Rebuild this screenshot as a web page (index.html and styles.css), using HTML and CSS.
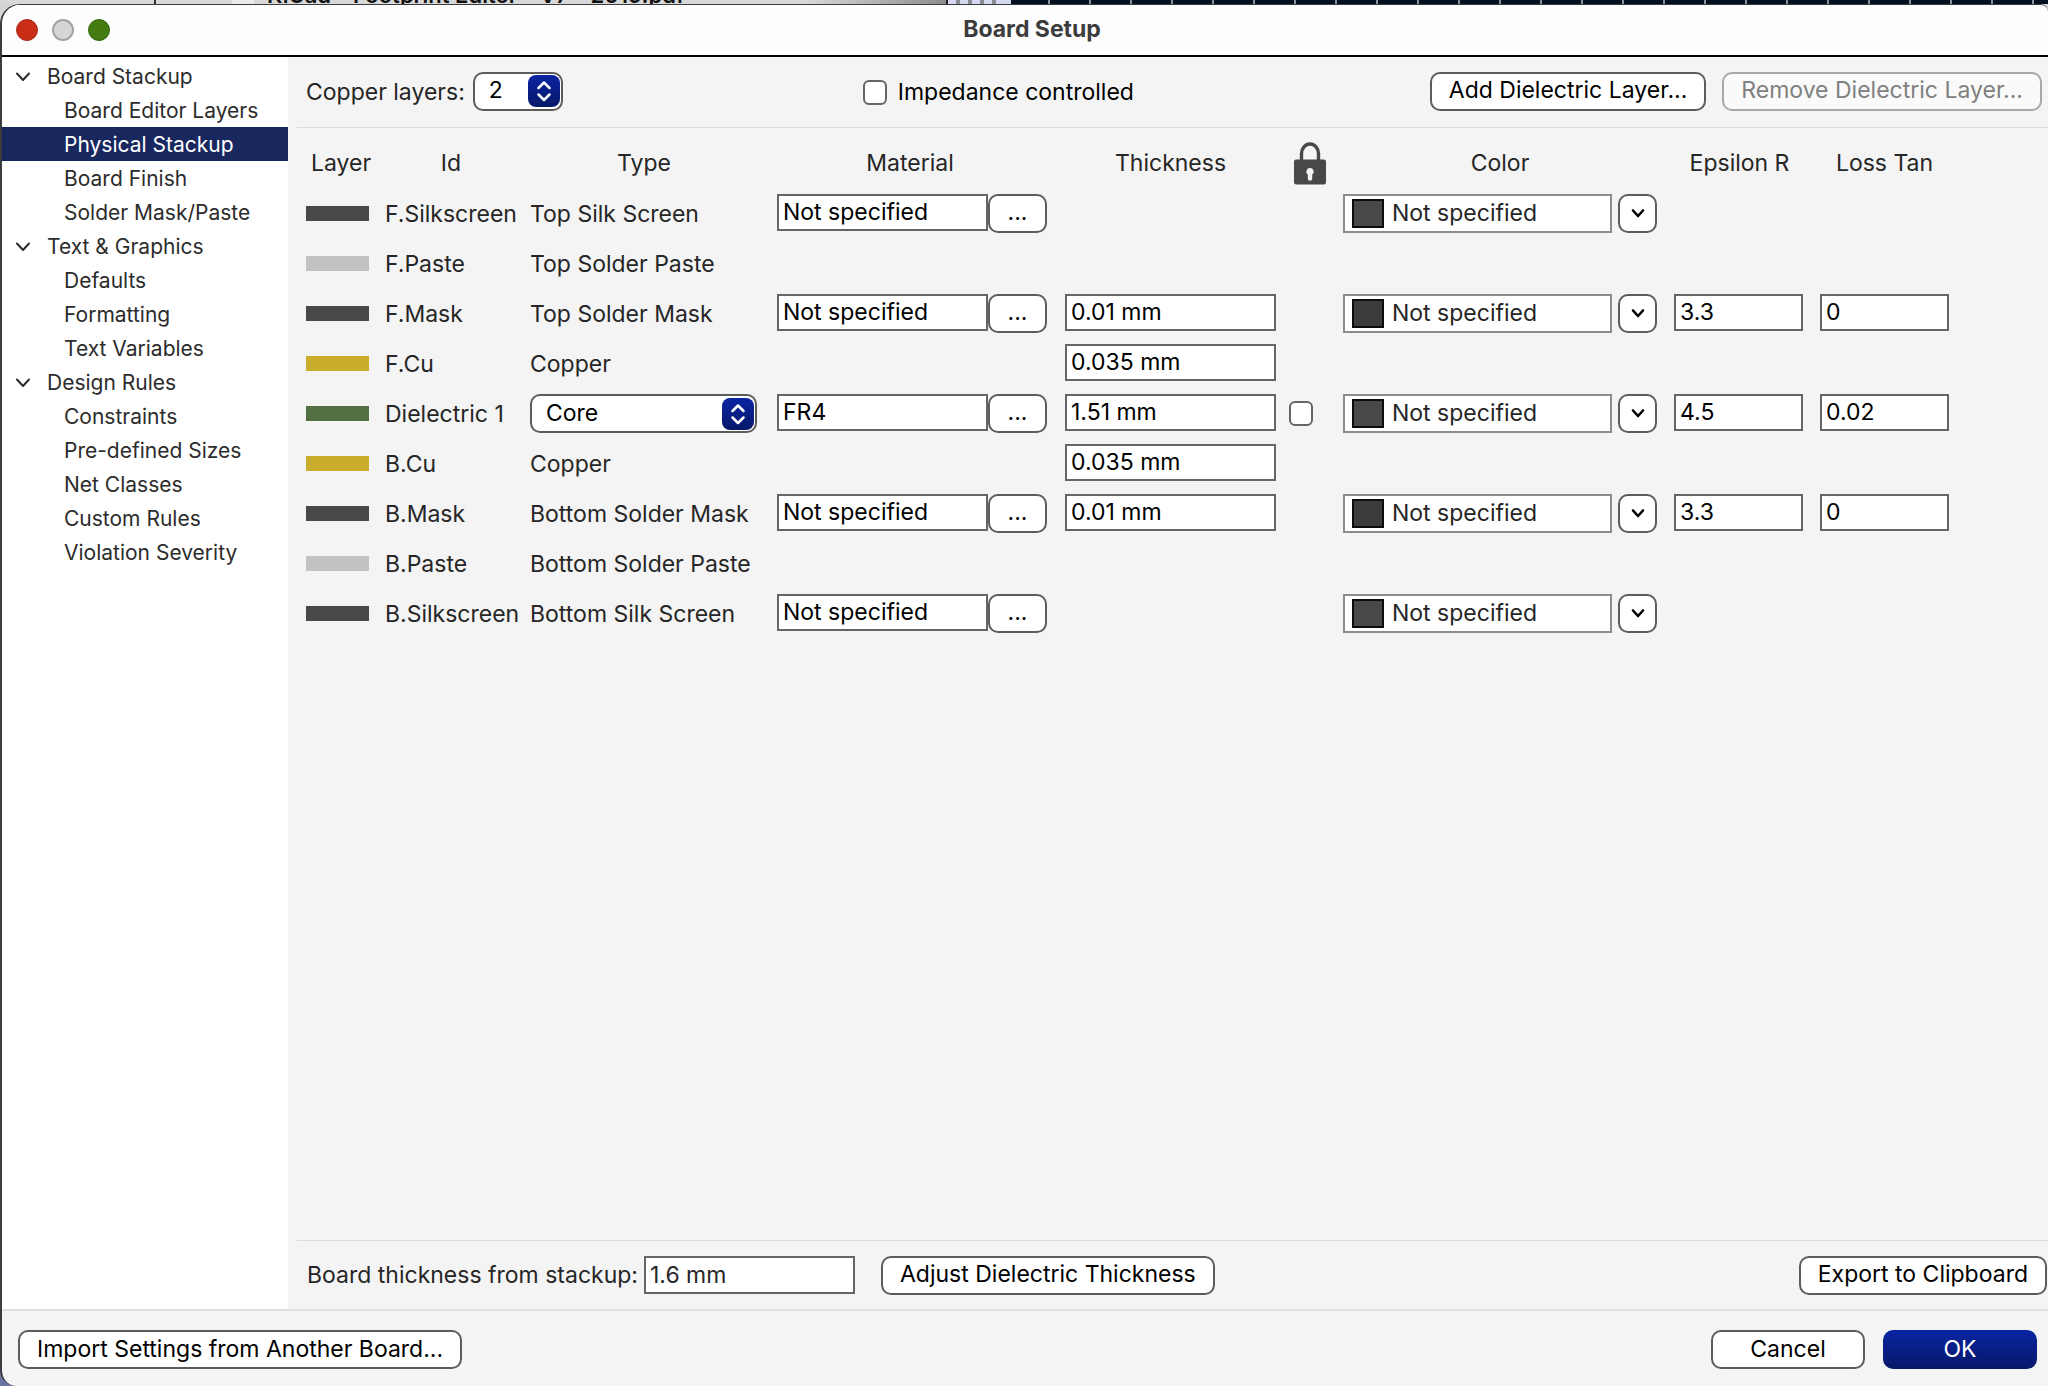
FILE: index.html
```html
<!DOCTYPE html>
<html lang="en">
<head>
<meta charset="utf-8">
<title>Board Setup</title>
<link rel="stylesheet" href="styles.css">
</head>
<body>
<svg class="defs" aria-hidden="true">
  <symbol id="updown" viewBox="0 0 32 32"><path d="M10.500 13 16 7.500 21.500 13M10.500 19.500 16 25 21.500 19.500" fill="none" stroke="#fff" stroke-width="2.500" stroke-linecap="round" stroke-linejoin="round"/></symbol>
  <symbol id="down" viewBox="0 0 16 16"><path d="M3 5.500 8 11 13 5.500" fill="none" stroke="currentColor" stroke-width="2.600" stroke-linecap="round" stroke-linejoin="round"/></symbol>
  <symbol id="twist" viewBox="0 0 16 16"><path d="M2 4.500 8 11 14 4.500" fill="none" stroke="currentColor" stroke-width="2" stroke-linecap="round" stroke-linejoin="round"/></symbol>
</svg>
<div class="behind">
  <div class="doc-title">KiCad – Footprint Editor – V7 – 2019.pdf</div>
  <div class="palette"></div>
  <div class="canvas"></div>
</div>
<div class="window">
  <header class="titlebar">
    <div class="lights">
      <button class="light close" aria-label="Close"></button>
      <button class="light mini" aria-label="Minimize" disabled></button>
      <button class="light full" aria-label="Zoom"></button>
    </div>
    <h1>Board Setup</h1>
  </header>
  <div class="body">
    <nav class="tree">
      <a class="group" href="#"><svg><use href="#twist"/></svg>Board Stackup</a>
      <a href="#">Board Editor Layers</a>
      <a class="current" href="#">Physical Stackup</a>
      <a href="#">Board Finish</a>
      <a href="#">Solder Mask/Paste</a>
      <a class="group" href="#"><svg><use href="#twist"/></svg>Text &amp; Graphics</a>
      <a href="#">Defaults</a>
      <a href="#">Formatting</a>
      <a href="#">Text Variables</a>
      <a class="group" href="#"><svg><use href="#twist"/></svg>Design Rules</a>
      <a href="#">Constraints</a>
      <a href="#">Pre-defined Sizes</a>
      <a href="#">Net Classes</a>
      <a href="#">Custom Rules</a>
      <a href="#">Violation Severity</a>
    </nav>
    <main class="panel">
      <div class="toolbar">
        <label for="copper">Copper layers:</label>
        <span class="pick pick-small"><select id="copper"><option>2</option><option>4</option></select><svg><use href="#updown"/></svg></span>
        <label class="check"><input type="checkbox">Impedance controlled</label>
        <div class="actions">
          <button class="btn">Add Dielectric Layer...</button>
          <button class="btn" disabled>Remove Dielectric Layer...</button>
        </div>
      </div>
      <div class="scroll">
      <table class="stack">
        <colgroup><col class="c-layer"><col class="c-id"><col class="c-type"><col class="c-mat"><col class="c-thick"><col class="c-lock"><col class="c-color"><col class="c-eps"><col class="c-loss"></colgroup>
        <thead>
          <tr><th>Layer</th><th>Id</th><th>Type</th><th class="th-mat">Material</th><th>Thickness</th>
          <th><svg class="lock" viewBox="0 0 34 44" role="img" aria-label="Locked"><path d="M8.500 20V12.500a8.500 9.500 0 0 1 17 0V20" fill="none" stroke="#484848" stroke-width="3.400"/><path fill="#484848" fill-rule="evenodd" d="M3 18.500H31a2 2 0 0 1 2 2V41a2.500 2.500 0 0 1-2.500 2.500H3.500A2.500 2.500 0 0 1 1 41V20.500a2 2 0 0 1 2-2zM17 27a3.600 3.600 0 0 0-2.200 6.500V37.500a2.200 2.200 0 0 0 4.400 0V33.500A3.600 3.600 0 0 0 17 27z"/></svg></th>
          <th>Color</th><th>Epsilon R</th><th>Loss Tan</th></tr>
        </thead>
        <tbody>
          <tr><td><i class="sw dark"></i></td><td>F.Silkscreen</td><td>Top Silk Screen</td>
            <td><div class="pair"><input class="wide" aria-label="Material" value="Not specified"><button class="btn more">...</button></div></td><td></td><td></td>
            <td><div class="color"><span class="well"><i class="chip"></i>Not specified</span><button class="btn drop" aria-label="Choose color"><svg><use href="#down"/></svg></button></div></td><td></td><td></td></tr>
          <tr><td><i class="sw paste"></i></td><td>F.Paste</td><td>Top Solder Paste</td><td></td><td></td><td></td><td></td><td></td><td></td></tr>
          <tr><td><i class="sw dark"></i></td><td>F.Mask</td><td>Top Solder Mask</td>
            <td><div class="pair"><input class="wide" aria-label="Material" value="Not specified"><button class="btn more">...</button></div></td>
            <td><div class="pair"><input class="wide" aria-label="Thickness" value="0.01 mm"></div></td><td></td>
            <td><div class="color"><span class="well"><i class="chip mask"></i>Not specified</span><button class="btn drop" aria-label="Choose color"><svg><use href="#down"/></svg></button></div></td>
            <td><div class="pair"><input class="narrow" aria-label="Epsilon R" value="3.3"></div></td><td><div class="pair"><input class="narrow" aria-label="Loss Tan" value="0"></div></td></tr>
          <tr><td><i class="sw copper"></i></td><td>F.Cu</td><td>Copper</td><td></td><td><div class="pair"><input class="wide" aria-label="Thickness" value="0.035 mm"></div></td><td></td><td></td><td></td><td></td></tr>
          <tr><td><i class="sw core"></i></td><td>Dielectric 1</td>
            <td><span class="pick pick-wide"><select aria-label="Type"><option>Core</option><option>PrePreg</option></select><svg><use href="#updown"/></svg></span></td>
            <td><div class="pair"><input class="wide" aria-label="Material" value="FR4"><button class="btn more">...</button></div></td>
            <td><div class="pair"><input class="wide" aria-label="Thickness" value="1.51 mm"></div></td><td><input type="checkbox" aria-label="Lock thickness"></td>
            <td><div class="color"><span class="well"><i class="chip"></i>Not specified</span><button class="btn drop" aria-label="Choose color"><svg><use href="#down"/></svg></button></div></td>
            <td><div class="pair"><input class="narrow" aria-label="Epsilon R" value="4.5"></div></td><td><div class="pair"><input class="narrow" aria-label="Loss Tan" value="0.02"></div></td></tr>
          <tr><td><i class="sw copper"></i></td><td>B.Cu</td><td>Copper</td><td></td><td><div class="pair"><input class="wide" aria-label="Thickness" value="0.035 mm"></div></td><td></td><td></td><td></td><td></td></tr>
          <tr><td><i class="sw dark"></i></td><td>B.Mask</td><td>Bottom Solder Mask</td>
            <td><div class="pair"><input class="wide" aria-label="Material" value="Not specified"><button class="btn more">...</button></div></td>
            <td><div class="pair"><input class="wide" aria-label="Thickness" value="0.01 mm"></div></td><td></td>
            <td><div class="color"><span class="well"><i class="chip mask"></i>Not specified</span><button class="btn drop" aria-label="Choose color"><svg><use href="#down"/></svg></button></div></td>
            <td><div class="pair"><input class="narrow" aria-label="Epsilon R" value="3.3"></div></td><td><div class="pair"><input class="narrow" aria-label="Loss Tan" value="0"></div></td></tr>
          <tr><td><i class="sw paste"></i></td><td>B.Paste</td><td>Bottom Solder Paste</td><td></td><td></td><td></td><td></td><td></td><td></td></tr>
          <tr><td><i class="sw dark"></i></td><td>B.Silkscreen</td><td>Bottom Silk Screen</td>
            <td><div class="pair"><input class="wide" aria-label="Material" value="Not specified"><button class="btn more">...</button></div></td><td></td><td></td>
            <td><div class="color"><span class="well"><i class="chip"></i>Not specified</span><button class="btn drop" aria-label="Choose color"><svg><use href="#down"/></svg></button></div></td><td></td><td></td></tr>
        </tbody>
      </table>
      </div>
      <div class="summary">
        <label for="total">Board thickness from stackup:</label>
        <input class="wide readonly" id="total" value="1.6 mm" readonly>
        <button class="btn adjust">Adjust Dielectric Thickness</button>
        <button class="btn export">Export to Clipboard</button>
      </div>
    </main>
  </div>
  <footer class="footer">
    <button class="btn">Import Settings from Another Board...</button>
    <div class="answer">
      <button class="btn big">Cancel</button>
      <button class="btn big primary">OK</button>
    </div>
  </footer>
</div>
</body>
</html>
```
FILE: styles.css
```css
* { box-sizing: border-box; }

body {
  margin: 0;
  min-height: 100vh;
  display: flex;
  flex-direction: column;
  background: linear-gradient(#d4d4d4 50%, #6c76a4 50%);
  font-family: Inter, "Liberation Sans", sans-serif;
  font-size: 23px;
  line-height: 28px;
  color: #262626;
}

input, select, button { font: inherit; color: #000; margin: 0; }
.defs { display: none; }

/* Sliver of the windows lying behind the dialog */
.behind { display: flex; height: 4px; overflow: hidden; background: #001022; }
.doc-title {
  width: 948px;
  padding-left: 267px;
  display: flex;
  align-items: flex-end;
  border-right: 2px solid #222;
  background: linear-gradient(90deg, #d8d8d8 154px, #333 154px 156px, #d8d8d8 156px 232px, #ececec 232px 254px, #d8d8d8 254px 85%, #8c8c8c);
  font-size: 22px;
  line-height: 18px;
  font-weight: 600;
  color: #111;
  white-space: nowrap;
}
.palette { width: 63px; padding: 0 8px; background: repeating-linear-gradient(90deg, #8c8c98 0 4px, #d4d8f0 4px 12px) content-box, #d4d8f0; }
.canvas { flex: 1; background: repeating-linear-gradient(90deg, #001022 0 37px, #8a8f98 37px 39px, #001022 39px 41px); }

.window {
  flex: 1;
  display: flex;
  flex-direction: column;
  border: 2px solid #3c3c40;
  border-width: 1px 0 0 2px;
  border-radius: 20px 8px 0 16px;
  background: #f4f4f4;
  overflow: hidden;
}

.titlebar {
  display: grid;
  grid-template-columns: 1fr auto 1fr;
  align-items: center;
  height: 52px;
  padding-left: 14px;
  background: #fdfdfd;
  border-bottom: 2px solid #000;
}
.titlebar h1 { margin: 0; padding-bottom: 2px; font-size: 23px; line-height: 28px; font-weight: 700; color: #3c3c3c; }
.lights { display: flex; gap: 14px; }
.light { width: 22px; height: 22px; padding: 0; border: 1px solid; border-radius: 50%; }
.close { background: #c92d15; border-color: #a92a16; }
.mini { background: #d6d6d6; border-color: #a2a2a2; border-width: 2px; }
.full { background: #447c12; border-color: #356410; }

.body { flex: 1; display: flex; }

.tree { width: 286px; padding-top: 2px; background: #fff; display: flex; flex-direction: column; }
.tree a {
  display: flex;
  align-items: center;
  height: 34px;
  padding: 2px 0 0 62px;
  color: #2c2c2c;
  text-decoration: none;
  font-size: 21px;
}
.tree .group { padding-left: 13px; gap: 16px; }
.tree .group svg { width: 16px; height: 16px; }
.tree .current { background: #18285f; color: #fff; }

.panel { flex: 1; min-width: 0; padding-left: 9px; display: flex; flex-direction: column; }

.toolbar { display: flex; align-items: center; height: 71px; padding: 0 6px 2px 9px; border-bottom: 1px solid #dcdcdc; }
.toolbar label { padding-top: 2px; }

.pick { display: inline-grid; vertical-align: middle; }
.pick select, .pick svg { grid-area: 1 / 1; }
.pick select {
  appearance: none;
  height: 39px;
  padding: 0 14px 2px;
  border: 2px solid #5c5c5c;
  border-radius: 10px;
  background: #fff;
}
.pick svg {
  justify-self: end;
  align-self: center;
  width: 32px;
  height: 32px;
  margin-right: 3px;
  border-radius: 8px;
  background: linear-gradient(#0a25a4, #071868);
  pointer-events: none;
}
.pick-small { width: 90px; margin-left: 8px; }
.pick-wide { width: 227px; }

.check { display: flex; align-items: center; gap: 11px; margin-left: 300px; color: #000; }
input[type="checkbox"] {
  appearance: none;
  width: 24px;
  height: 25px;
  border: 2px solid #666;
  border-radius: 6px;
  background: #fff;
}
.actions { display: flex; gap: 16px; margin-left: auto; }

.btn {
  height: 39px;
  padding: 0 17px 2px;
  border: 2px solid #5c5c5c;
  border-radius: 10px;
  background: #fff;
  white-space: nowrap;
}
.btn:disabled { border-color: #a8a8a8; background: #fafafa; color: #808080; }

.scroll { flex: 1; }
.stack { table-layout: fixed; width: 1661px; border-collapse: collapse; }
.c-layer { width: 88px; } .c-id { width: 132px; } .c-type { width: 254px; }
.c-mat { width: 282px; } .c-thick { width: 235px; } .c-lock { width: 44px; }
.c-color { width: 336px; } .c-eps { width: 143px; } .c-loss { width: 147px; }
.stack th { height: 60px; padding: 10px 0 0; font-weight: 400; }
.stack .th-mat { padding-right: 4px; }
.stack td { height: 50px; padding: 0; white-space: nowrap; }
.stack td:nth-child(1) { padding-left: 9px; }
.stack td:nth-child(2) { padding-top: 2px; }
.stack td:nth-child(3) { padding: 1px 0 0 13px; }
.stack td:nth-child(4), .stack td:nth-child(8) { padding-left: 6px; }
.stack td:nth-child(5) { padding-left: 12px; }
.stack td:nth-child(6) { padding-left: 1px; }
.stack td:nth-child(7) { padding-left: 11px; }
.stack td:nth-child(9) { padding-left: 9px; }
.lock { display: block; width: 34px; height: 44px; margin: 0 auto; }
.stack input[type="checkbox"] { display: block; }

.sw { display: block; width: 63px; height: 15px; }
.dark { background: #484848; }
.paste { background: #c2c2c2; }
.copper { background: #caad2b; }
.core { background: #527041; }

.pair, .color { display: flex; height: 39px; }
.wide, .narrow { height: 37px; padding: 0 4px; border: 2px solid #666; border-radius: 0; background: #fff; }
.wide { width: 211px; }
.narrow { width: 129px; }
.readonly { color: #262626; height: 38px; }
.more { width: 59px; padding: 0 0 2px; }
.color { gap: 6px; }
.well {
  display: flex;
  align-items: center;
  gap: 8px;
  width: 269px;
  height: 39px;
  padding-left: 7px;
  border: 2px solid #8c8c8c;
  background: #fff;
}
.chip { width: 32px; height: 29px; border: 2px solid #0c0c0c; background: #484848; }
.chip.mask { background: #3c3c3c; }
.drop { width: 39px; padding: 0; display: grid; place-items: center; }
.drop svg { width: 16px; height: 16px; }

.summary { display: flex; align-items: center; height: 69px; padding: 0 1px 0 10px; border-top: 1px solid #dcdcdc; }
.summary .wide { margin-left: 6px; }
.adjust { margin-left: 26px; }
.export { margin-left: auto; }

.footer {
  display: flex;
  align-items: center;
  justify-content: space-between;
  height: 77px;
  padding: 2px 11px 0 16px;
  border-top: 2px solid #e0e0e0;
}
.answer { display: flex; gap: 18px; }
.big { width: 154px; }
.primary { border: 0; background: linear-gradient(#0a25a4, #071868); color: #fff; }
```
